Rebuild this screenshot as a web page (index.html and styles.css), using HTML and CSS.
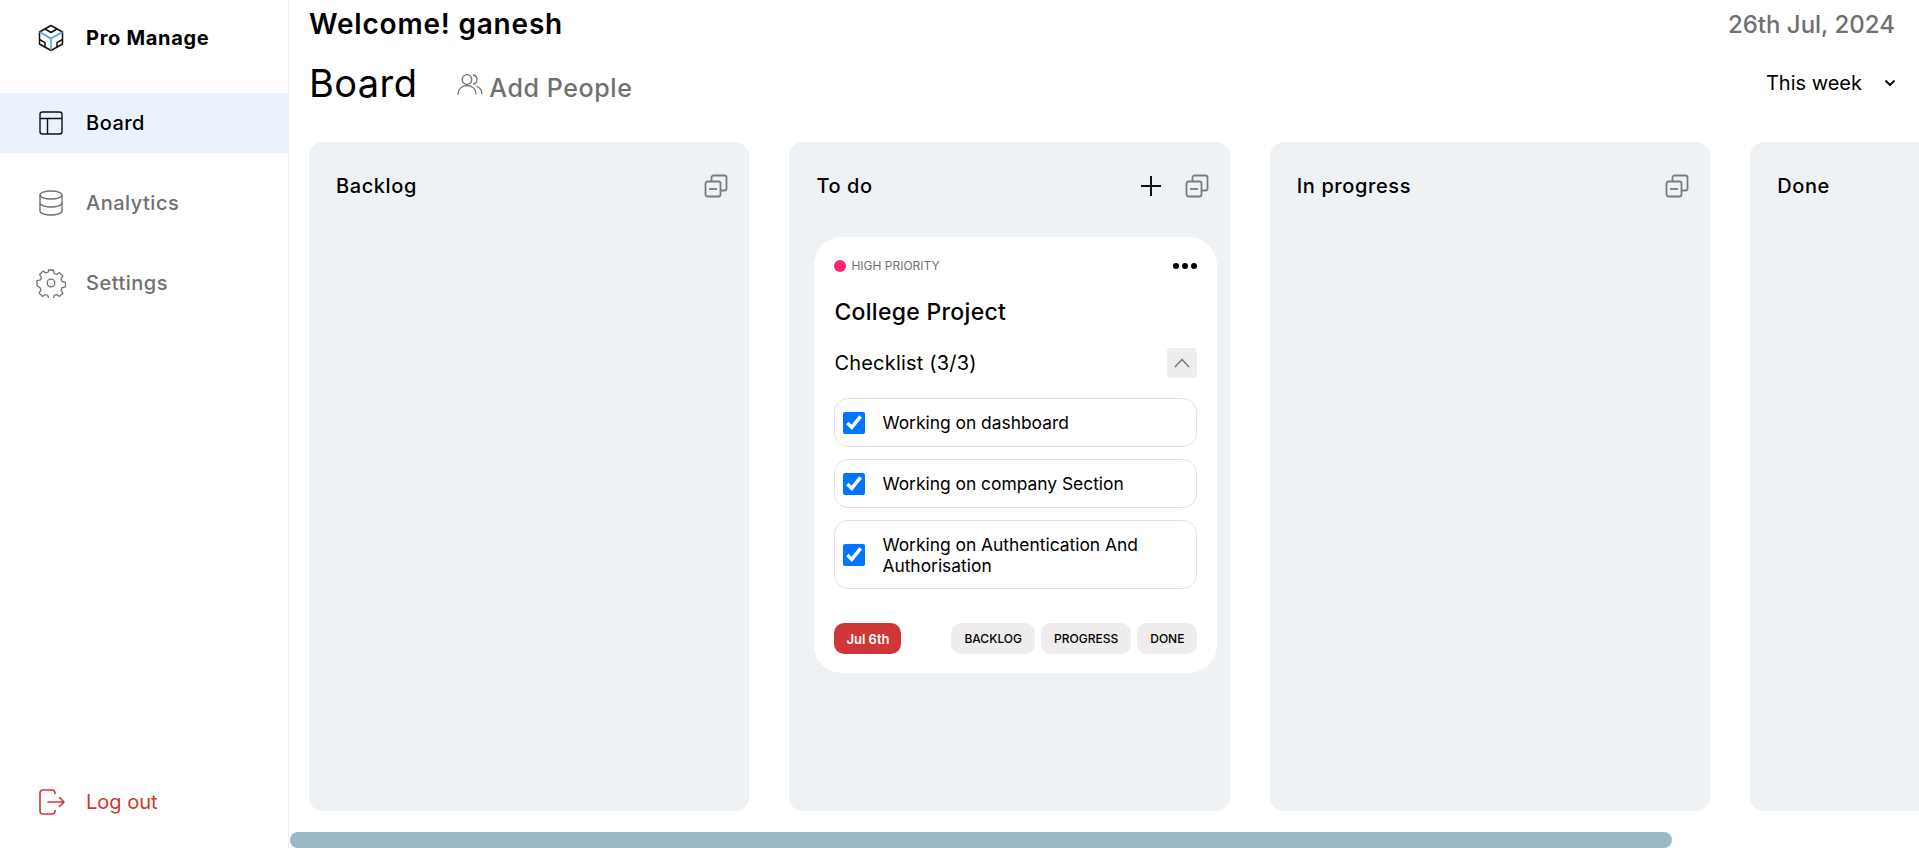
FILE: index.html
```html
<!DOCTYPE html>
<html>

<head>
    <meta charset="utf-8">
    <meta name="viewport" content="width=device-width, initial-scale=1">
    <title>Pro Manage</title>
    <link rel="stylesheet" href="styles.css">
</head>

<body>
    <aside class="sidebar">
        <div class="brand">
            <svg class="nav-icon" width="26" height="28" viewBox="0 0 26 28" fill="none" stroke="#111" stroke-width="1.5" stroke-linejoin="round">
                <path d="M13 1.500 24.500 8v12L13 26.500 1.500 20V8z" />
                <path d="M7 5 13 8.500 19 5" />
                <path d="M1.500 8 13 14.500 24.500 8" stroke="#4a9fe0" />
                <path d="M13 14.500v12" stroke="#4a9fe0" />
                <path d="M1.500 15.500 7 18.600v4.600M24.500 15.500 19 18.600v4.600" />
            </svg>
            <span>Pro Manage</span>
        </div>

        <nav class="nav">
            <a class="nav-item active" href="#">
                <svg class="nav-icon" width="26" height="26" viewBox="0 0 26 26" fill="none" stroke="#111" stroke-width="1.4">
                    <rect x="2" y="2" width="22" height="22" rx="2.500" />
                    <path d="M2 8.500h22M9.500 8.500V24" />
                </svg>
                <span>Board</span>
            </a>
            <a class="nav-item" href="#">
                <svg class="nav-icon" width="26" height="28" viewBox="0 0 26 28" fill="none" stroke="#707070" stroke-width="1.4">
                    <ellipse cx="13" cy="6" rx="11" ry="4" />
                    <path d="M2 6v16c0 2.200 5 4 11 4s11-1.800 11-4V6" />
                    <path d="M2 14c0 2.200 5 4 11 4s11-1.800 11-4" />
                </svg>
                <span>Analytics</span>
            </a>
            <a class="nav-item" href="#">
                <svg class="nav-icon" width="30" height="30" viewBox="0 0 30 30" fill="none" stroke="#707070" stroke-width="1.3" stroke-linejoin="round">
                    <circle cx="15" cy="15" r="3.800" />
                    <path d="M12.600 2h4.800l.8 3.500 2.300 1 3-1.900 3.400 3.400-1.900 3 1 2.300 3.500.8v4.800l-3.500.8-1 2.300 1.900 3-3.400 3.400-3-1.900-2.300 1-.8 3.500h-4.800l-.8-3.500-2.300-1-3 1.900-3.400-3.400 1.900-3-1-2.300L1 17.400v-4.800l3.500-.8 1-2.300-1.900-3L7 3.100l3 1.900 2.300-1z" />
                </svg>
                <span>Settings</span>
            </a>
        </nav>

        <a class="logout" href="#">
            <svg class="nav-icon" width="28" height="26" viewBox="0 0 28 26" fill="none" stroke="#cf3636" stroke-width="1.6" stroke-linecap="round" stroke-linejoin="round">
                <path d="M17 4.500V4a3 3 0 0 0-3-3H5a3 3 0 0 0-3 3v18a3 3 0 0 0 3 3h9a3 3 0 0 0 3-3v-.5" />
                <path d="M10 13h16M21.500 8.500 26 13l-4.500 4.500" />
            </svg>
            <span>Log out</span>
        </a>
    </aside>

    <main class="main">
        <header class="top-row">
            <h2 class="welcome">Welcome! ganesh</h2>
            <span class="date">26th Jul, 2024</span>
        </header>

        <div class="title-row">
            <h1 class="title">Board</h1>
            <a class="add-people" href="#">
                <svg width="26" height="24" viewBox="0 0 26 24" fill="none" stroke="#707070" stroke-width="1.300" stroke-linecap="round">
                    <circle cx="10" cy="6.500" r="4.800" />
                    <path d="M1 21c0-5 4-8.500 9-8.500s9 3.500 9 8.500" />
                    <path d="M16.500 2c2.200.6 3.500 2.400 3.500 4.500s-1.300 3.900-3.500 4.500" />
                    <path d="M20 13.500c2.800 1 4.800 3.800 4.800 7" />
                </svg>
                <span>Add People</span>
            </a>
            <div class="range">
                <span>This week</span>
                <svg width="12" height="8" viewBox="0 0 12 8" fill="none" stroke="#111" stroke-width="2">
                    <path d="M1.500 1.500 6 6l4.500-4.500" />
                </svg>
            </div>
        </div>

        <section class="board">
            <div class="column">
                <div class="column-head">
                    <h3>Backlog</h3>
                    <div class="column-actions">
                        <svg class="collapse" width="24" height="24" viewBox="0 0 24 24" fill="none" stroke="#7a7a7a" stroke-width="1.800" stroke-linejoin="round">
                            <rect x="1.500" y="7.500" width="15" height="15" rx="2" />
                            <path d="M7.500 7.500V3.500a2 2 0 0 1 2-2h11a2 2 0 0 1 2 2v11a2 2 0 0 1-2 2h-4" />
                            <path d="M5 15h8" />
                        </svg>
                    </div>
                </div>
            </div>

            <div class="column">
                <div class="column-head">
                    <h3>To do</h3>
                    <div class="column-actions">
                        <svg width="20" height="20" viewBox="0 0 20 20" fill="none" stroke="#111" stroke-width="2">
                            <path d="M10 0v20M0 10h20" />
                        </svg>
                        <svg class="collapse" width="24" height="24" viewBox="0 0 24 24" fill="none" stroke="#7a7a7a" stroke-width="1.800" stroke-linejoin="round">
                            <rect x="1.500" y="7.500" width="15" height="15" rx="2" />
                            <path d="M7.500 7.500V3.500a2 2 0 0 1 2-2h11a2 2 0 0 1 2 2v11a2 2 0 0 1-2 2h-4" />
                            <path d="M5 15h8" />
                        </svg>
                    </div>
                </div>

                <article class="card">
                    <div class="card-top">
                        <div class="priority"><i class="dot"></i>HIGH PRIORITY</div>
                        <div class="more"><i></i><i></i><i></i></div>
                    </div>
                    <h4 class="card-title">College Project</h4>
                    <div class="checklist-head">
                        <span>Checklist (3/3)</span>
                        <button class="toggle">
                            <svg width="16" height="10" viewBox="0 0 16 10" fill="none" stroke="#707070" stroke-width="1.300">
                                <path d="M1 9l7-7.500L15 9" />
                            </svg>
                        </button>
                    </div>
                    <ul class="checklist">
                        <li><input type="checkbox" checked><span>Working on dashboard</span></li>
                        <li><input type="checkbox" checked><span>Working on company Section</span></li>
                        <li><input type="checkbox" checked><span>Working on Authentication And Authorisation</span></li>
                    </ul>
                    <div class="card-foot">
                        <span class="due">Jul 6th</span>
                        <div class="chips">
                            <span class="chip">BACKLOG</span>
                            <span class="chip">PROGRESS</span>
                            <span class="chip">DONE</span>
                        </div>
                    </div>
                </article>
            </div>

            <div class="column">
                <div class="column-head">
                    <h3>In progress</h3>
                    <div class="column-actions">
                        <svg class="collapse" width="24" height="24" viewBox="0 0 24 24" fill="none" stroke="#7a7a7a" stroke-width="1.800" stroke-linejoin="round">
                            <rect x="1.500" y="7.500" width="15" height="15" rx="2" />
                            <path d="M7.500 7.500V3.500a2 2 0 0 1 2-2h11a2 2 0 0 1 2 2v11a2 2 0 0 1-2 2h-4" />
                            <path d="M5 15h8" />
                        </svg>
                    </div>
                </div>
            </div>

            <div class="column">
                <div class="column-head">
                    <h3>Done</h3>
                    <div class="column-actions">
                        <svg class="collapse" width="24" height="24" viewBox="0 0 24 24" fill="none" stroke="#7a7a7a" stroke-width="1.800" stroke-linejoin="round">
                            <rect x="1.500" y="7.500" width="15" height="15" rx="2" />
                            <path d="M7.500 7.500V3.500a2 2 0 0 1 2-2h11a2 2 0 0 1 2 2v11a2 2 0 0 1-2 2h-4" />
                            <path d="M5 15h8" />
                        </svg>
                    </div>
                </div>
            </div>
        </section>

        <div class="scroll-track"><div class="scroll-thumb"></div></div>
    </main>
</body>

</html>
```

FILE: styles.css
```css
* {
    box-sizing: border-box;
}

body {
    margin: 0;
    height: 100vh;
    display: flex;
    overflow: hidden;
    background-color: #fff;
    color: #000;
    font-family: "Inter", "Liberation Sans", sans-serif;
}

a {
    color: inherit;
    text-decoration: none;
}

/* sidebar */
.sidebar {
    width: 289px;
    flex-shrink: 0;
    display: flex;
    flex-direction: column;
    border-right: 1px solid #edf2fa;
}

.brand {
    height: 76px;
    display: flex;
    align-items: center;
    padding-left: 38px;
    font-size: 20px;
    font-weight: 700;
    letter-spacing: .7px;
}

.nav-icon {
    flex-shrink: 0;
}

.brand span,
.nav-item span {
    margin-left: 22px;
}

.nav {
    margin-top: 17px;
    display: flex;
    flex-direction: column;
    gap: 20px;
}

.nav-item {
    height: 60px;
    display: flex;
    align-items: center;
    padding-left: 38px;
    font-size: 20px;
    font-weight: 500;
    letter-spacing: .5px;
    color: #707070;
}

.nav-item.active {
    background-color: #eaf2fd;
    color: #000;
}

.nav-item:last-child {
    padding-left: 36px;
}

.nav-item:last-child span {
    margin-left: 20px;
}

.logout {
    margin-top: auto;
    margin-bottom: 33px;
    display: flex;
    align-items: center;
    padding-left: 38px;
    font-size: 20px;
    color: #cf3636;
}

.logout span {
    margin-left: 20px;
}

/* main area */
.main {
    flex: 1;
    min-width: 0;
    display: flex;
    flex-direction: column;
}

.top-row {
    height: 48px;
    flex-shrink: 0;
    display: flex;
    justify-content: space-between;
    align-items: center;
    padding: 0 24px 0 20px;
}

.welcome {
    margin: 0;
    font-size: 28px;
    font-weight: 600;
    letter-spacing: .8px;
}

.date {
    font-size: 24px;
    font-weight: 500;
    color: #707070;
}

.title-row {
    height: 70px;
    flex-shrink: 0;
    display: flex;
    align-items: center;
    padding: 0 23px 0 20px;
}

.title {
    margin: 0;
    font-size: 38px;
    font-weight: 400;
    letter-spacing: .4px;
}

.add-people {
    margin: 10px 0 0 40px;
    display: flex;
    align-items: center;
    gap: 6px;
    font-size: 25px;
    font-weight: 500;
    letter-spacing: .6px;
    color: #707070;
}

.add-people svg {
    margin-bottom: 6px;
}

.range {
    margin-left: auto;
    display: flex;
    align-items: center;
    gap: 22px;
    font-size: 20px;
}

/* board */
.board {
    height: 693px;
    flex-shrink: 0;
    display: flex;
    gap: 40px;
    padding: 24px 0 0 20px;
    overflow: hidden;
}

.column {
    width: 440.4px;
    flex-shrink: 0;
    padding: 0 21px 0 25px;
    border-radius: 14px;
    background-color: #eef2f5;
}

.column-head {
    height: 95px;
    display: flex;
    justify-content: space-between;
    align-items: center;
    padding: 0 0 7px 2px;
}

.column-head h3 {
    margin: 0;
    font-size: 20px;
    font-weight: 500;
    letter-spacing: .6px;
}

.column-actions {
    display: flex;
    align-items: center;
    gap: 24px;
}

/* card */
.card {
    width: 403px;
    padding: 21px 20px 19px 20px;
    border-radius: 28px;
    background-color: #fff;
}

.card-top {
    display: flex;
    justify-content: space-between;
    align-items: center;
}

.priority {
    display: flex;
    align-items: center;
    gap: 5px;
    font-size: 12px;
    font-weight: 400;
    color: #707070;
}

.dot {
    width: 12px;
    height: 12px;
    border-radius: 50%;
    background-color: #ff2473;
}

.more {
    display: flex;
    gap: 3px;
}

.more i {
    width: 6px;
    height: 6px;
    border-radius: 50%;
    background-color: #000;
}

.card-title {
    margin: 22px 0 0;
    font-size: 23px;
    line-height: 34px;
    font-weight: 500;
    letter-spacing: .3px;
}

.checklist-head {
    margin-top: 19px;
    display: flex;
    justify-content: space-between;
    align-items: center;
    font-size: 20px;
    letter-spacing: .2px;
}

.toggle {
    width: 30px;
    height: 30px;
    padding: 0;
    display: flex;
    justify-content: center;
    align-items: center;
    border: none;
    border-radius: 4px;
    background-color: #eeecec;
}

.checklist {
    margin: 20px 0 0;
    padding: 0;
    list-style: none;
    display: flex;
    flex-direction: column;
    gap: 12px;
}

.checklist li {
    display: flex;
    align-items: center;
    padding: 12.5px 9px 12.5px 8px;
    border: 1px solid #e2e2e2;
    border-radius: 14px;
    font-size: 17.4px;
    line-height: 21px;
}

.checklist input {
    width: 22px;
    height: 22px;
    margin: 0 17px 0 0;
    flex-shrink: 0;
}

.card-foot {
    margin-top: 34px;
    display: flex;
    justify-content: space-between;
    align-items: center;
}

.due {
    height: 31px;
    padding: 0 12px;
    display: flex;
    align-items: center;
    border-radius: 10px;
    background-color: #cf3636;
    color: #fff;
    font-size: 13px;
    font-weight: 600;
}

.chips {
    display: flex;
    gap: 6px;
}

.chip {
    height: 31px;
    padding: 0 13px;
    display: flex;
    align-items: center;
    border-radius: 10px;
    background-color: #eeecec;
    font-size: 12px;
    font-weight: 500;
}

/* the horizontal scroll bar under the board */
.scroll-track {
    height: 16px;
    margin-top: 21px;
    flex-shrink: 0;
    padding-left: 1px;
}

.scroll-thumb {
    width: 1382px;
    height: 16px;
    border-radius: 8px;
    background-color: #9cb7c6;
}
```
